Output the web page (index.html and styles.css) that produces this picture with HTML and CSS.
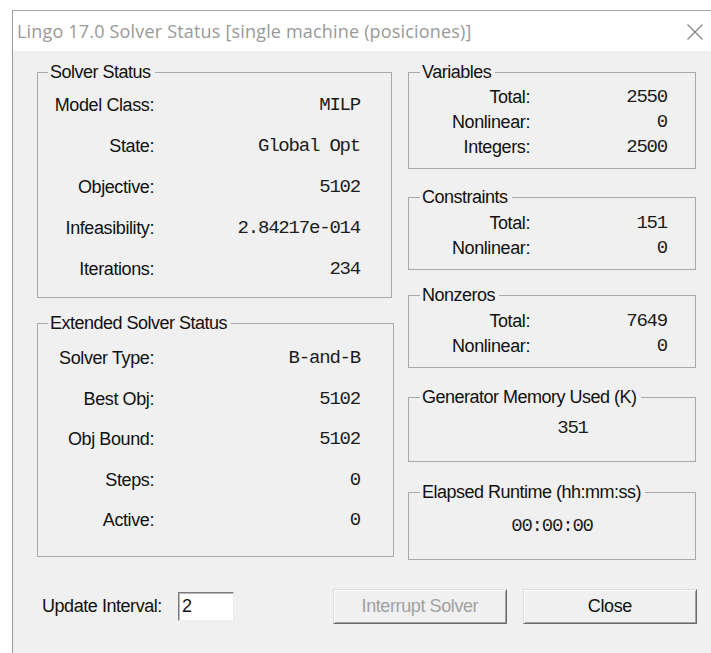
FILE: index.html
```html
<!DOCTYPE html>
<html lang="es">
<head>
<meta charset="utf-8">
<title>Lingo 17.0 Solver Status</title>
<link rel="stylesheet" href="styles.css">
</head>
<body>
<div class="window">
  <div class="titlebar">
    <span class="title">Lingo 17.0 Solver Status [single machine (posiciones)]</span>
    <svg class="close-x" width="16" height="16" viewBox="0 0 16 16" aria-hidden="true">
      <path d="M0.5 0.5L15.5 15.5M15.5 0.5L0.5 15.5" />
    </svg>
  </div>
  <div class="client">
    <div class="groups">
      <div class="col col-left">
        <fieldset class="group status">
          <legend>Solver Status</legend>
          <div class="rows rows-big">
            <span class="lbl">Model Class:</span><span class="val">MILP</span>
            <span class="lbl">State:</span><span class="val">Global Opt</span>
            <span class="lbl">Objective:</span><span class="val">5102</span>
            <span class="lbl">Infeasibility:</span><span class="val">2.84217e-014</span>
            <span class="lbl">Iterations:</span><span class="val">234</span>
          </div>
        </fieldset>
        <fieldset class="group extended">
          <legend>Extended Solver Status</legend>
          <div class="rows rows-ext">
            <span class="lbl">Solver Type:</span><span class="val">B-and-B</span>
            <span class="lbl">Best Obj:</span><span class="val">5102</span>
            <span class="lbl">Obj Bound:</span><span class="val">5102</span>
            <span class="lbl">Steps:</span><span class="val">0</span>
            <span class="lbl">Active:</span><span class="val">0</span>
          </div>
        </fieldset>
      </div>
      <div class="col col-right">
        <fieldset class="group side variables">
          <legend>Variables</legend>
          <div class="rows rows-small">
            <span class="lbl">Total:</span><span class="val">2550</span>
            <span class="lbl">Nonlinear:</span><span class="val">0</span>
            <span class="lbl">Integers:</span><span class="val">2500</span>
          </div>
        </fieldset>
        <fieldset class="group side constraints">
          <legend>Constraints</legend>
          <div class="rows rows-small">
            <span class="lbl">Total:</span><span class="val">151</span>
            <span class="lbl">Nonlinear:</span><span class="val">0</span>
          </div>
        </fieldset>
        <fieldset class="group side nonzeros">
          <legend>Nonzeros</legend>
          <div class="rows rows-small">
            <span class="lbl">Total:</span><span class="val">7649</span>
            <span class="lbl">Nonlinear:</span><span class="val">0</span>
          </div>
        </fieldset>
        <fieldset class="group side memory">
          <legend>Generator Memory Used (K)</legend>
          <div class="single memory-val">351</div>
        </fieldset>
        <fieldset class="group side runtime">
          <legend>Elapsed Runtime (hh:mm:ss)</legend>
          <div class="single runtime-val">00:00:00</div>
        </fieldset>
      </div>
    </div>
    <div class="footer">
      <label class="interval-label" for="interval">Update Interval:</label>
      <input id="interval" class="interval-input" type="text" value="2">
      <button class="btn btn-interrupt" disabled>Interrupt Solver</button>
      <button class="btn btn-close">Close</button>
    </div>
  </div>
</div>
</body>
</html>
```

FILE: styles.css
```css
html, body {
  margin: 0;
  padding: 0;
  background: #ffffff;
}

body {
  font-family: "Liberation Sans", Arial, sans-serif;
  color: #111;
  overflow: hidden;
}

/* dialog frame */
.window {
  box-sizing: border-box;
  margin: 10px 0 0 12px;
  height: 643px;
  border-left: 1px solid #9c9c9c;
  border-top: 1px solid #a8a8a8;
  display: flex;
  flex-direction: column;
}

.titlebar {
  height: 40px;
  flex: none;
  background: #ffffff;
  display: flex;
  align-items: center;
  justify-content: space-between;
  padding: 0 8px 0 4px;
}

.title {
  font-family: "Open Sans", "Noto Sans", sans-serif;
  font-size: 18px;
  letter-spacing: 0.18px;
  color: #999;
  white-space: nowrap;
}

.close-x {
  display: block;
  margin-top: 1px;
}

.close-x path {
  stroke: #7c7c7c;
  stroke-width: 1.1;
  fill: none;
}

/* client area */
.client {
  flex: 1;
  background: #f0f0f0;
  padding: 11px 0 0 24px;
}

.groups {
  display: flex;
  gap: 14px;
  align-items: flex-start;
}

.col {
  display: flex;
  flex-direction: column;
  align-items: flex-start;
}

.col-left {
  width: 357px;
}

.col-right {
  width: 288px;
}

/* group boxes */
.group {
  box-sizing: border-box;
  margin: 0;
  padding: 0;
  min-width: 0;
  border: 1px solid #a9a9a9;
}

.group legend {
  font-size: 18px;
  line-height: 20px;
  letter-spacing: -0.5px;
  padding: 0 4px 0 2px;
  margin-left: 10px;
  color: #111;
  white-space: nowrap;
}

.side {
  width: 288px;
}

.side legend {
  margin-left: 11px;
}

.status {
  width: 355px;
}

.extended {
  width: 357px;
  margin-top: 15px;
}

.constraints {
  margin-top: 18px;
}

.nonzeros {
  margin-top: 15px;
}

.memory {
  margin-top: 19px;
}

.runtime {
  margin-top: 20px;
}

/* label / value rows */
.rows {
  display: grid;
  align-items: center;
}

.lbl {
  font-size: 18px;
  line-height: 20px;
  letter-spacing: -0.4px;
  text-align: right;
  white-space: nowrap;
}

.val,
.single {
  font-family: "Liberation Mono", "Courier New", monospace;
  font-size: 19px;
  line-height: 20px;
  letter-spacing: -1.2px;
  color: #1c1c1c;
  text-align: right;
  white-space: nowrap;
}

.rows-big {
  grid-template-columns: 116px 1fr;
  grid-auto-rows: 41px;
  padding: 2px 31px 8px 0;
}

.rows-ext {
  grid-template-columns: 116px 1fr;
  grid-auto-rows: 40.5px;
  padding: 5px 33px 15.5px 0;
}

.rows-small {
  grid-template-columns: 121px 1fr;
  grid-auto-rows: 25px;
  padding: 2px 28px 9px 0;
}

.constraints .rows-small,
.nonzeros .rows-small {
  padding-top: 3px;
}

.single {
  text-align: center;
}

.memory-val {
  padding: 11px 0 23px 41px;
}

.runtime-val {
  padding: 14px 0 23px 0;
}

/* bottom controls */
.footer {
  display: flex;
  align-items: center;
  height: 35px;
  margin-top: 29px;
  padding-left: 5px;
}

.interval-label {
  font-size: 18px;
  letter-spacing: -0.45px;
  white-space: nowrap;
}

.interval-input {
  box-sizing: border-box;
  width: 56px;
  height: 29px;
  margin: 0 0 0 16px;
  padding: 0 0 0 3px;
  font-family: "Liberation Sans", Arial, sans-serif;
  font-size: 18px;
  color: #111;
  background: #ffffff;
  border-style: solid;
  border-width: 1px;
  border-color: #7a7a7a #ececec #ececec #7a7a7a;
  box-shadow: inset 1px 1px 0 #b9b9b9;
  outline: none;
}

.btn {
  box-sizing: border-box;
  width: 174px;
  height: 35px;
  padding: 0;
  font-family: "Liberation Sans", Arial, sans-serif;
  font-size: 18px;
  letter-spacing: -0.4px;
  background: #f0f0f0;
  border-style: solid;
  border-width: 1px;
  border-color: #dcdcdc #6a6a6a #6a6a6a #dcdcdc;
  box-shadow: inset 1px 1px 0 #ffffff, inset -1px -1px 0 #a3a3a3;
  border-radius: 0;
}

.btn-interrupt {
  margin-left: 99px;
  color: #a0a0a0;
}

.btn-close {
  margin-left: 16px;
  color: #111;
}
```
